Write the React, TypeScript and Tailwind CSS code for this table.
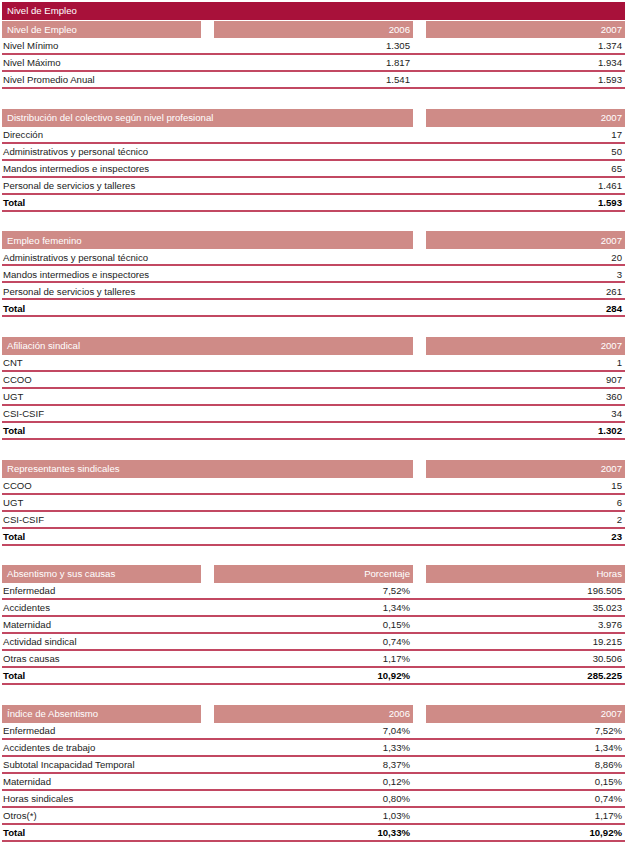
type Row = { label: string; a?: string; b: string; total?: boolean };

type Table = {
  band?: string;
  head: string;
  colA?: string;
  colB: string;
  rows: Row[];
};

const tables: Table[] = [
  {
    band: 'Nivel de Empleo',
    head: 'Nivel de Empleo',
    colA: '2006',
    colB: '2007',
    rows: [
      { label: 'Nivel Mínimo', a: '1.305', b: '1.374' },
      { label: 'Nivel Máximo', a: '1.817', b: '1.934' },
      { label: 'Nivel Promedio Anual', a: '1.541', b: '1.593' },
    ],
  },
  {
    head: 'Distribución del colectivo según nivel profesional',
    colB: '2007',
    rows: [
      { label: 'Dirección', b: '17' },
      { label: 'Administrativos y personal técnico', b: '50' },
      { label: 'Mandos intermedios e inspectores', b: '65' },
      { label: 'Personal de servicios y talleres', b: '1.461' },
      { label: 'Total', b: '1.593', total: true },
    ],
  },
  {
    head: 'Empleo femenino',
    colB: '2007',
    rows: [
      { label: 'Administrativos y personal técnico', b: '20' },
      { label: 'Mandos intermedios e inspectores', b: '3' },
      { label: 'Personal de servicios y talleres', b: '261' },
      { label: 'Total', b: '284', total: true },
    ],
  },
  {
    head: 'Afiliación sindical',
    colB: '2007',
    rows: [
      { label: 'CNT', b: '1' },
      { label: 'CCOO', b: '907' },
      { label: 'UGT', b: '360' },
      { label: 'CSI-CSIF', b: '34' },
      { label: 'Total', b: '1.302', total: true },
    ],
  },
  {
    head: 'Representantes sindicales',
    colB: '2007',
    rows: [
      { label: 'CCOO', b: '15' },
      { label: 'UGT', b: '6' },
      { label: 'CSI-CSIF', b: '2' },
      { label: 'Total', b: '23', total: true },
    ],
  },
  {
    head: 'Absentismo y sus causas',
    colA: 'Porcentaje',
    colB: 'Horas',
    rows: [
      { label: 'Enfermedad', a: '7,52%', b: '196.505' },
      { label: 'Accidentes', a: '1,34%', b: '35.023' },
      { label: 'Maternidad', a: '0,15%', b: '3.976' },
      { label: 'Actividad sindical', a: '0,74%', b: '19.215' },
      { label: 'Otras causas', a: '1,17%', b: '30.506' },
      { label: 'Total', a: '10,92%', b: '285.225', total: true },
    ],
  },
  {
    head: 'Índice de Absentismo',
    colA: '2006',
    colB: '2007',
    rows: [
      { label: 'Enfermedad', a: '7,04%', b: '7,52%' },
      { label: 'Accidentes de trabajo', a: '1,33%', b: '1,34%' },
      { label: 'Subtotal Incapacidad Temporal', a: '8,37%', b: '8,86%' },
      { label: 'Maternidad', a: '0,12%', b: '0,15%' },
      { label: 'Horas sindicales', a: '0,80%', b: '0,74%' },
      { label: 'Otros(*)', a: '1,03%', b: '1,17%' },
      { label: 'Total', a: '10,33%', b: '10,92%', total: true },
    ],
  },
];

function DataTable({ t }: { t: Table }) {
  return (
    <section className="flex flex-col">
      {t.band ? (
        <div className="flex h-[18px] items-center bg-[#a8113a] pl-[5px] text-white">{t.band}</div>
      ) : null}
      <div className={`grid grid-cols-3 gap-x-[13px] text-white ${t.band ? 'mt-px h-[17px]' : 'h-[18px]'}`}>
        <div className={`flex items-center bg-[#cf8b87] pl-[5px] ${t.colA ? '' : 'col-span-2'}`}>{t.head}</div>
        {t.colA ? (
          <div className="flex items-center justify-end bg-[#cf8b87] pr-[3px]">{t.colA}</div>
        ) : null}
        <div className="flex items-center justify-end bg-[#cf8b87] pr-[3px]">{t.colB}</div>
      </div>
      {t.rows.map((r) => (
        <div
          key={r.label}
          className={`grid h-[17px] grid-cols-3 items-center gap-x-[13px] border-b-2 border-[#c24862] pt-px ${
            r.total ? 'font-bold text-black' : 'text-[#222]'
          }`}
        >
          <div className="whitespace-nowrap pl-px">{r.label}</div>
          <div className="pr-[3px] text-right">{r.a ?? ''}</div>
          <div className="pr-[3px] text-right">{r.b}</div>
        </div>
      ))}
    </section>
  );
}

export default function App() {
  return (
    <div className="min-h-[849px] bg-white px-[2px] pt-[2px] font-['Liberation_Sans',Arial,sans-serif] text-[9.6px] leading-none">
      <div className="flex flex-col gap-[19.67px]">
        {tables.map((t) => (
          <DataTable key={t.head + (t.band ?? '')} t={t} />
        ))}
      </div>
    </div>
  );
}
